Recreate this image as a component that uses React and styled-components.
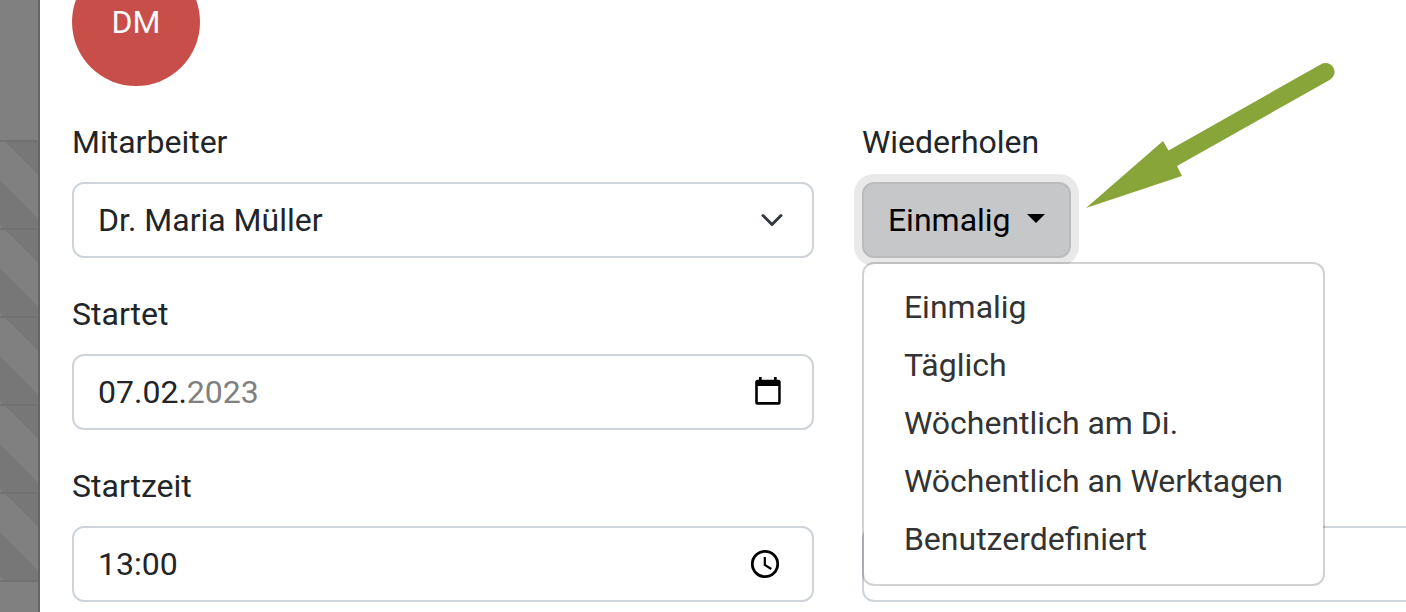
import React from "react";
import styled, { createGlobalStyle } from "styled-components";

const GlobalStyle = createGlobalStyle`
  *, *::before, *::after { box-sizing: border-box; }
  body {
    margin: 0;
    overflow: hidden;
    background: #fff;
    color: #212529;
    font: 400 32px/48px Roboto, "Liberation Sans", sans-serif;
  }
  input, select, button { font: inherit; color: inherit; }
`;

const Page = styled.div`
  display: flex;
  align-items: stretch;
  height: 100vh;
  overflow: hidden;
`;

const Calendar = styled.aside`
  flex: 0 0 40px;
  display: flex;
  flex-direction: column;
  background: #808080;
  border-right: 2px solid #666;
`;

const CalendarHead = styled.div`
  flex: 0 0 140px;
`;

const ClosedHours = styled.div`
  flex: 0 0 440px;
  background:
    repeating-linear-gradient(to bottom, #717171 0 2px, transparent 2px 88px),
    linear-gradient(45deg, #777 25%, #808080 25% 50%, #777 50% 75%, #808080 75%) 0 -4px / 88px 88px;
`;

const OpenHours = styled.div`
  flex: 1;
  border-top: 2px solid #717171;
`;

const Panel = styled.main`
  flex: 1;
  min-width: 0;
  padding: 0 0 0 32px;
`;

const AvatarRow = styled.header`
  height: 86px;
  display: flex;
  align-items: flex-end;
`;

const Avatar = styled.div`
  flex: none;
  width: 128px;
  height: 128px;
  border-radius: 50%;
  display: flex;
  align-items: center;
  justify-content: center;
  background: #c74e49;
  color: #f8f9fa;
`;

const Form = styled.form`
  display: grid;
  grid-template-columns: minmax(0, 15fr) minmax(0, 11fr);
  column-gap: 48px;
  row-gap: 32px;
  padding-top: 32px;
`;

const Field = styled.div`
  grid-column: ${(p) => p.$column};
  grid-row: ${(p) => p.$row};
  display: flex;
  flex-direction: column;
  align-items: ${(p) => (p.$fit ? "flex-start" : "stretch")};
  gap: 16px;
  margin-right: ${(p) => (p.$bleed ? "-280px" : "0")};
`;

const Label = styled.label`
  display: block;
  height: 48px;
`;

const Control = styled.div`
  display: flex;
  align-items: center;
  height: 76px;
  padding-right: 30px;
  border: 2px solid #ced4da;
  border-radius: 12px;
  background: #fff;
`;

const SelectBox = styled.div`
  display: grid;
  align-items: center;
  & > * { grid-area: 1 / 1; }
  & > svg { justify-self: end; margin-right: 26px; pointer-events: none; }
`;

const Select = styled.select`
  appearance: none;
  width: 100%;
  height: 76px;
  padding: 0 72px 0 24px;
  border: 2px solid #ced4da;
  border-radius: 12px;
  background: #fff;
`;

const TextInput = styled.input`
  flex: 1;
  min-width: 0;
  height: 72px;
  padding: 0 0 0 24px;
  border: 0;
  background: transparent;
  outline: 0;
`;

const Parts = styled.div`
  flex: 1;
  display: flex;
  align-items: center;
  padding-left: 24px;
`;

const Part = styled.input`
  width: ${(p) => p.$digits}ch;
  height: 48px;
  padding: 0;
  border: 0;
  background: transparent;
  color: ${(p) => (p.$muted ? "#808080" : "inherit")};
`;

const IconButton = styled.button`
  display: flex;
  padding: 0;
  border: 0;
  background: none;
  color: #000;
`;

const Dropdown = styled.div`
  position: relative;
`;

const Toggle = styled.button`
  display: flex;
  align-items: center;
  gap: 16px;
  height: 76px;
  padding: 0 24px;
  border: 2px solid #babbbc;
  border-radius: 12px;
  background: #c6c7c8;
  color: #000;
  box-shadow: 0 0 0 8px #e9e9e9;
`;

const Menu = styled.ul`
  position: absolute;
  top: 80px;
  left: 0;
  z-index: 1;
  margin: 0;
  padding: 14px 0 16px;
  list-style: none;
  border: 2px solid rgba(0, 0, 0, 0.18);
  border-radius: 12px;
  background: #fff;
  background-clip: padding-box;
`;

const MenuItem = styled.button`
  display: block;
  width: 100%;
  padding: 5px 40px;
  border: 0;
  background: none;
  color: #333;
  text-align: left;
  white-space: nowrap;
`;

const Pointer = styled.svg`
  position: absolute;
  left: 1086px;
  top: 62px;
  z-index: 2;
  pointer-events: none;
`;

const options = [
  "Einmalig",
  "Täglich",
  "Wöchentlich am Di.",
  "Wöchentlich an Werktagen",
  "Benutzerdefiniert",
];

const Chevron = () => (
  <svg width="32" height="24" viewBox="0 0 16 16" fill="none" stroke="#343a40" strokeWidth="2" strokeLinecap="round" strokeLinejoin="round" aria-hidden="true">
    <path d="m2 5 6 6 6-6" />
  </svg>
);

const CalendarIcon = () => (
  <svg width="32" height="30" viewBox="0 0 32 30" aria-hidden="true">
    <path
      fill="currentColor"
      fillRule="evenodd"
      d="M9 0h2.700v2.700H24V0h2.700v2.700h1.500a2.500 2.500 0 0 1 2.500 2.500v20a2.500 2.500 0 0 1-2.500 2.500H7.700a2.500 2.500 0 0 1-2.500-2.500v-20a2.500 2.500 0 0 1 2.500-2.500H9zM7.800 9v16h20.400V9z"
    />
  </svg>
);

const ClockIcon = () => (
  <svg width="32" height="30" viewBox="0 0 32 30" fill="none" stroke="currentColor" aria-hidden="true">
    <circle cx="15" cy="15" r="12.700" strokeWidth="2.800" />
    <path d="M14.800 8v8l6.500 4" strokeWidth="2.200" />
  </svg>
);

export default function App() {
  return (
    <>
      <GlobalStyle />
      <Page>
        <Calendar>
          <CalendarHead />
          <ClosedHours />
          <OpenHours />
        </Calendar>
        <Panel>
          <AvatarRow>
            <Avatar>DM</Avatar>
          </AvatarRow>
          <Form>
            <Field $column={1} $row={1}>
              <Label htmlFor="employee">Mitarbeiter</Label>
              <SelectBox>
                <Select id="employee" defaultValue="mueller">
                  <option value="mueller">Dr. Maria Müller</option>
                </Select>
                <Chevron />
              </SelectBox>
            </Field>
            <Field $column={2} $row={1} $fit>
              <Label htmlFor="repeat">Wiederholen</Label>
              <Dropdown>
                <Toggle id="repeat" type="button" aria-haspopup="menu" aria-expanded="true">
                  Einmalig
                  <svg width="18" height="12" viewBox="0 0 18 12" aria-hidden="true">
                    <path d="M0 0h18L9 9z" fill="currentColor" />
                  </svg>
                </Toggle>
                <Menu>
                  {options.map((option) => (
                    <li key={option}>
                      <MenuItem type="button">{option}</MenuItem>
                    </li>
                  ))}
                </Menu>
              </Dropdown>
            </Field>
            <Field $column={1} $row={2}>
              <Label htmlFor="start-day">Startet</Label>
              <Control>
                <Parts>
                  <Part id="start-day" $digits={2} defaultValue="07" aria-label="Tag" />.
                  <Part $digits={2} defaultValue="02" aria-label="Monat" />.
                  <Part $digits={4} $muted defaultValue="2023" aria-label="Jahr" />
                </Parts>
                <IconButton type="button" aria-label="Kalender öffnen">
                  <CalendarIcon />
                </IconButton>
              </Control>
            </Field>
            <Field $column={1} $row={3}>
              <Label htmlFor="start-hour">Startzeit</Label>
              <Control>
                <Parts>
                  <Part id="start-hour" $digits={2} defaultValue="13" aria-label="Stunde" />:
                  <Part $digits={2} defaultValue="00" aria-label="Minute" />
                </Parts>
                <IconButton type="button" aria-label="Uhrzeit wählen">
                  <ClockIcon />
                </IconButton>
              </Control>
            </Field>
            <Field $column={2} $row={3} $bleed>
              <Label as="div" />
              <Control>
                <TextInput aria-label="Endzeit" />
              </Control>
            </Field>
          </Form>
        </Panel>
      </Page>
      <Pointer width="250" height="148" viewBox="0 0 250 148" fill="#88a53a" aria-hidden="true">
        <path d="M0 146 77 79l5.500 9.500L235 2.200a9 9 0 0 1 9 15.600L91 104l5 10z" />
      </Pointer>
    </>
  );
}
